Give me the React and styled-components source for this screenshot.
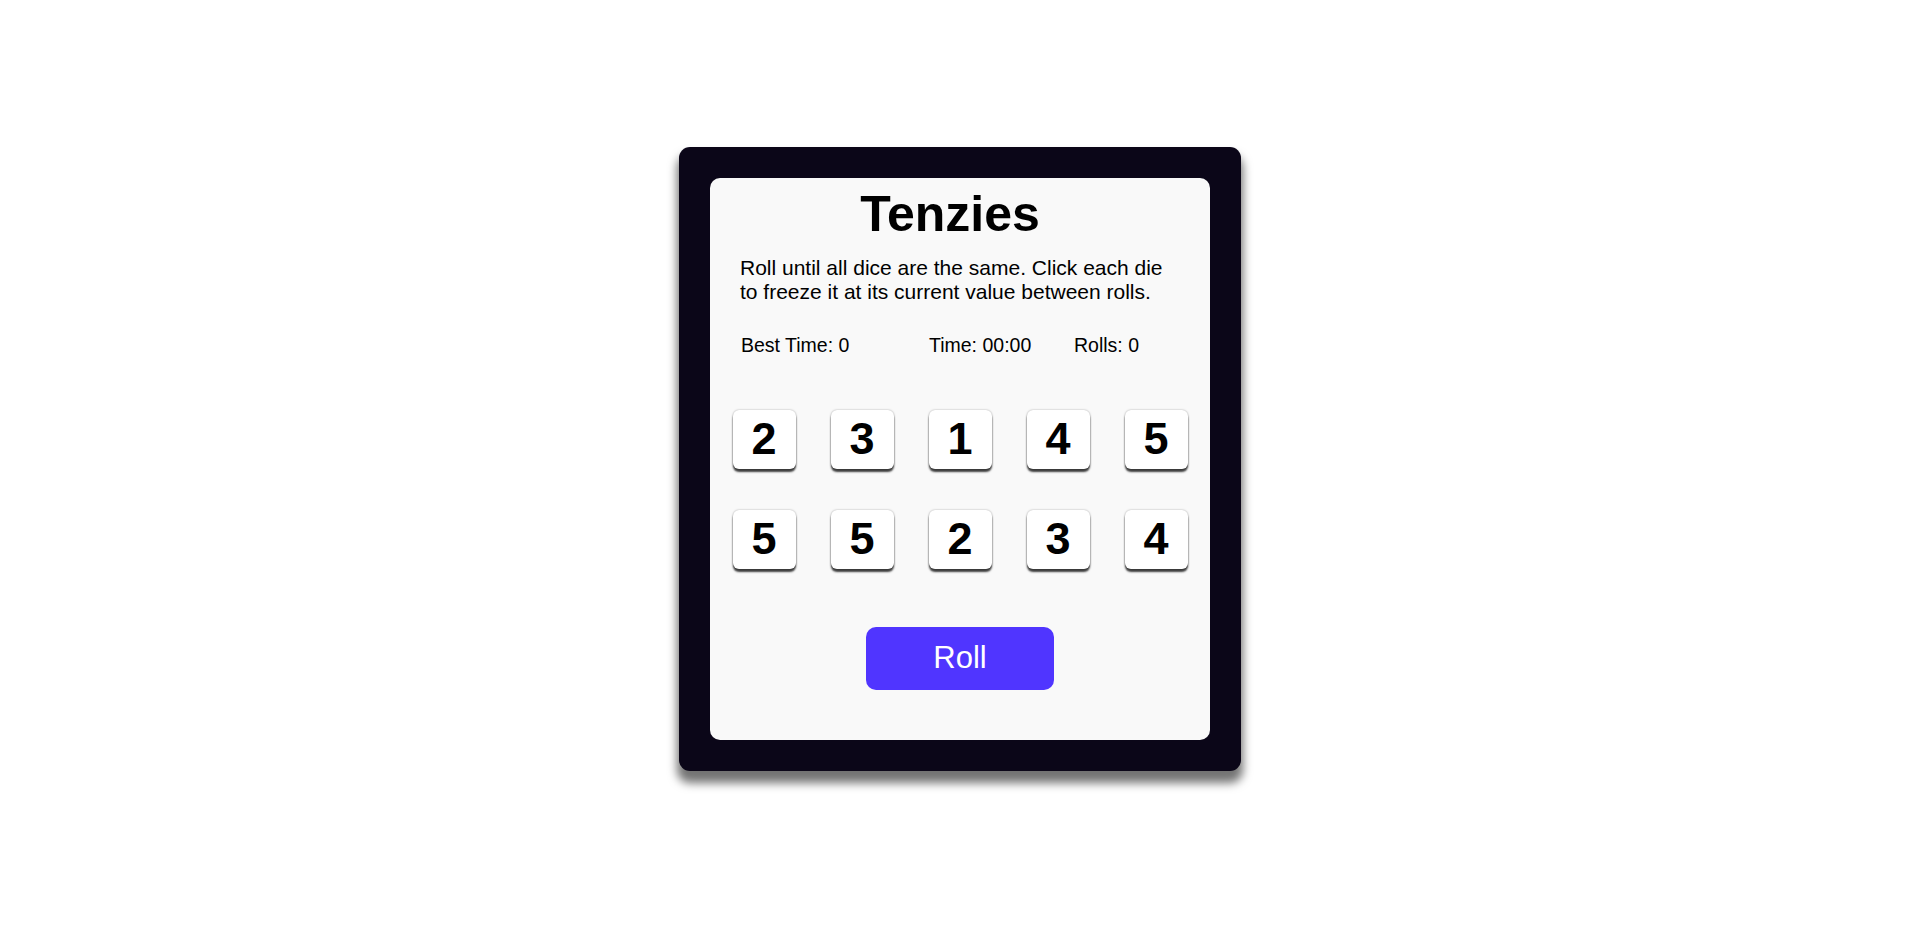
import React from 'react';
import styled, { createGlobalStyle } from 'styled-components';

const GlobalStyle = createGlobalStyle`
  * {
    box-sizing: border-box;
  }

  body {
    margin: 0;
    background: #ffffff;
    font-family: 'Liberation Sans', Arial, sans-serif;
    color: #000000;
  }
`;

const Page = styled.main`
  min-height: 100vh;
  padding-bottom: 9px;
  display: flex;
  align-items: center;
  justify-content: center;
`;

const Frame = styled.div`
  width: 562px;
  padding: 31px;
  background: #0b0618;
  border-radius: 11px;
  box-shadow: 0 10px 10px 2px rgba(0, 0, 0, 0.55);
`;

const Board = styled.section`
  height: 562px;
  padding: 8px 0 0;
  background: #f9f9f9;
  border-radius: 10px;
  display: flex;
  flex-direction: column;
`;

const Title = styled.h1`
  margin: 0;
  padding-right: 20px;
  font-size: 50px;
  line-height: 57px;
  font-weight: 700;
  text-align: center;
`;

const Instructions = styled.p`
  margin: 13px 0 0;
  padding: 0 30px;
  font-size: 21px;
  line-height: 24px;
`;

const Stats = styled.div`
  margin-top: 30px;
  padding: 0 30px 0 31px;
  display: grid;
  grid-template-columns: 188px 145px auto;
  font-size: 19.5px;
  line-height: 22px;
`;

const Stat = styled.span``;

const DiceGrid = styled.div`
  margin-top: 54px;
  display: grid;
  grid-template-columns: repeat(5, 63px);
  column-gap: 35px;
  row-gap: 41px;
  justify-content: center;
`;

const Die = styled.button`
  width: 63px;
  height: 59px;
  padding: 0;
  border: none;
  border-radius: 6px;
  background: ${({ $held }) => ($held ? '#59e391' : '#ffffff')};
  box-shadow: 0 0 2px rgba(0, 0, 0, 0.35), 0 3px 2px rgba(0, 0, 0, 0.75);
  display: flex;
  align-items: center;
  justify-content: center;
  font-family: 'Liberation Sans', Arial, sans-serif;
  font-size: 45px;
  font-weight: 700;
  color: #000000;
  cursor: pointer;
`;

const RollButton = styled.button`
  align-self: center;
  width: 188px;
  height: 63px;
  margin-top: 58px;
  border: none;
  border-radius: 10px;
  background: #5035ff;
  color: #ffffff;
  font-family: 'Liberation Sans', Arial, sans-serif;
  font-size: 31px;
  cursor: pointer;
`;

const dice = [2, 3, 1, 4, 5, 5, 5, 2, 3, 4];

export default function App() {
  return (
    <>
      <GlobalStyle />
      <Page>
        <Frame>
          <Board>
            <Title>Tenzies</Title>
            <Instructions>
              Roll until all dice are the same. Click each die to freeze it at its current value between rolls.
            </Instructions>
            <Stats>
              <Stat>Best Time: 0</Stat>
              <Stat>Time: 00:00</Stat>
              <Stat>Rolls: 0</Stat>
            </Stats>
            <DiceGrid>
              {dice.map((value, i) => (
                <Die key={i}>{value}</Die>
              ))}
            </DiceGrid>
            <RollButton>Roll</RollButton>
          </Board>
        </Frame>
      </Page>
    </>
  );
}
